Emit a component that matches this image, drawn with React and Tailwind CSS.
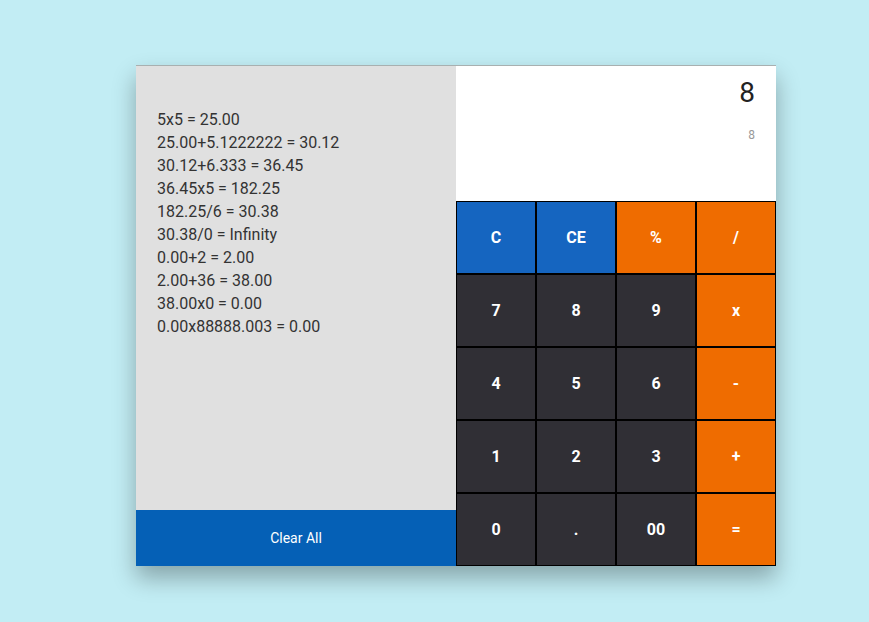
import React, { useState } from "react";

const history = [
  "5x5 = 25.00",
  "25.00+5.1222222 = 30.12",
  "30.12+6.333 = 36.45",
  "36.45x5 = 182.25",
  "182.25/6 = 30.38",
  "30.38/0 = Infinity",
  "0.00+2 = 2.00",
  "2.00+36 = 38.00",
  "38.00x0 = 0.00",
  "0.00x88888.003 = 0.00",
];

const keys = [
  ["C", "blue"], ["CE", "blue"], ["%", "orange"], ["/", "orange"],
  ["7", "dark"], ["8", "dark"], ["9", "dark"], ["x", "orange"],
  ["4", "dark"], ["5", "dark"], ["6", "dark"], ["-", "orange"],
  ["1", "dark"], ["2", "dark"], ["3", "dark"], ["+", "orange"],
  ["0", "dark"], [".", "dark"], ["00", "dark"], ["=", "orange"],
];

const colors = {
  blue: "bg-[#1565c0]",
  orange: "bg-[#ef6c00]",
  dark: "bg-[#302f35]",
};

export default function App() {
  const [display] = useState("8");

  return (
    <div
      className="min-h-screen w-full bg-[#c2edf4] pt-[66px] pl-[136px]"
      style={{ fontFamily: "Roboto, 'Liberation Sans', sans-serif" }}
    >
      <div className="flex w-[640px] h-[501px] shadow-[0_12px_22px_rgba(0,0,0,0.3)] border-t border-[#a8b0b0] -mt-px">
        {/* History */}
        <div className="w-[320px] flex flex-col bg-[#e0e0e0]">
          <div className="flex-1 pl-[21px] pt-[42px] text-[16px] leading-[23px] text-[#333]">
            {history.map((h, i) => (
              <div key={i}>{h}</div>
            ))}
          </div>
          <button className="h-[56px] w-full bg-[#0560b6] text-white text-[14px]">
            Clear All
          </button>
        </div>

        {/* Calculator */}
        <div className="w-[320px] flex flex-col">
          <div className="h-[135px] bg-white flex flex-col items-end pr-[21px]">
            <div className="text-[28px] leading-none text-[#222] mt-[13px]">{display}</div>
            <div className="text-[12px] text-[#999] mt-[19px]">{display}</div>
          </div>
          <div className="grid grid-cols-4">
            {keys.map(([k, c]) => (
              <button
                key={k}
                className={`h-[73px] border border-black text-white font-bold text-[16px] ${colors[c]}`}
              >
                {k}
              </button>
            ))}
          </div>
        </div>
      </div>
    </div>
  );
}
